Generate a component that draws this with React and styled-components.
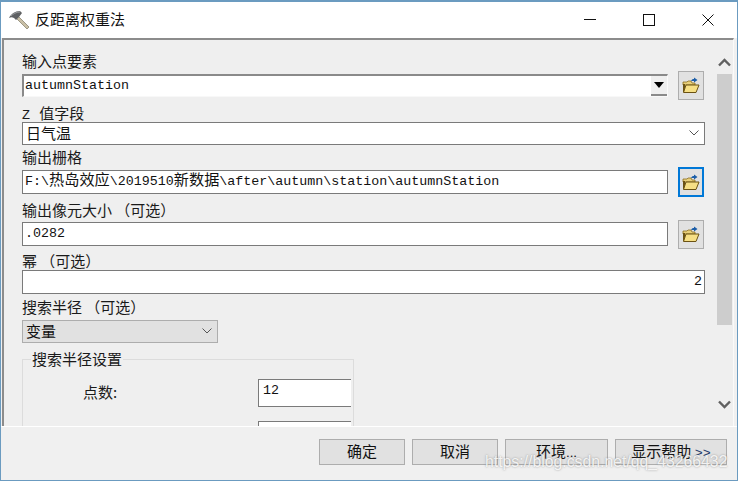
import styled, { createGlobalStyle } from 'styled-components';

const GlobalStyle = createGlobalStyle`
  html, body {
    margin: 0;
    padding: 0;
    background: #f0f0f0;
    overflow: hidden;
  }
  * {
    box-sizing: border-box;
  }
`;

const cjk = '"Noto Sans CJK SC", sans-serif';
const mono = '"Liberation Mono", "Noto Sans CJK SC", monospace';

// Window frame
const Window = styled.div`
  position: relative;
  width: 738px;
  height: 481px;
  border: 1px solid #6b9bc0;
  border-top-width: 2px;
  background: #f0f0f0;
  display: flex;
  flex-direction: column;
  overflow: hidden;
  color: #111;
`;

const TitleBar = styled.div`
  height: 36px;
  flex: none;
  background: #fff;
  display: flex;
  align-items: center;
  padding-left: 7px;
`;

const Title = styled.span`
  font: 15px/20px ${cjk};
  color: #111;
  margin-left: 5px;
  margin-top: -2px;
  flex: 1;
`;

const WinButton = styled.div`
  width: 59px;
  height: 36px;
  display: flex;
  align-items: center;
  justify-content: center;
`;

// Tool body
const Body = styled.div`
  height: 388px;
  flex: none;
  margin: 0 3px 0 1px;
  border-top: 2px solid #8c8c8c;
  border-left: 2px solid #8c8c8c;
  border-right: 1px solid #fafafa;
  background: #efefef;
  display: flex;
  overflow: hidden;
`;

const Form = styled.div`
  flex: 1;
  padding: 12px 0 0 18px;
  min-width: 0;
`;

const Label = styled.div`
  height: 18px;
  font: 15px/18px ${cjk};
  color: #1a1a1a;
  margin-top: ${(p) => p.$mt || 0}px;
  margin-bottom: ${(p) => p.$mb || 0}px;
  white-space: nowrap;
`;

const Latin = styled.span`
  font: 13.33px/18px ${mono};
  margin-right: 6px;
`;

const Row = styled.div`
  height: ${(p) => p.$h}px;
  display: flex;
  align-items: center;
  width: 682px;
`;

const TextBox = styled.div`
  height: ${(p) => p.$h || 24}px;
  width: ${(p) => p.$w || 646}px;
  flex: none;
  border: 1px solid #7a7a7a;
  background: #fff;
  padding: 0 2px;
  font: 13.33px/21px ${mono};
  color: #111;
  text-align: ${(p) => (p.$right ? 'right' : 'left')};
  white-space: nowrap;
  overflow: hidden;
`;

const Wide = styled.span`
  font: 15.2px/1 ${cjk};
`;

const Combo = styled.div`
  width: 646px;
  height: 23px;
  flex: none;
  display: flex;
  background: #f4f4f4;
  border-top: 2px solid #8a8a8a;
  border-left: 2px solid #8a8a8a;
  border-bottom: 1px solid #f8f8f8;
  border-right: 1px solid #fafafa;
`;

const ComboText = styled.div`
  flex: 1;
  background: #fff;
  font: 13.33px/19px ${mono};
  padding-left: 1px;
  color: #111;
`;

const ComboArrow = styled.div`
  width: 16px;
  background: #efefef;
  border-bottom: 2px solid #8a8a8a;
  display: flex;
  align-items: center;
  justify-content: center;
`;

const Select = styled.div`
  width: ${(p) => p.$w}px;
  height: 23px;
  border: 1px solid ${(p) => (p.$grey ? '#adadad' : '#7a7a7a')};
  background: ${(p) => (p.$grey ? '#e1e1e1' : '#fff')};
  display: flex;
  align-items: center;
  justify-content: space-between;
  padding: 0 5px 2px 3px;
  font: 15px/19px ${cjk};
  color: #111;
`;

const Browse = styled.div`
  width: 26px;
  height: ${(p) => p.$h || 29}px;
  margin-left: ${(p) => p.$ml || 10}px;
  flex: none;
  background: #e1e1e1;
  border: ${(p) => (p.$active ? '2px solid #0078d7' : '1px solid #adadad')};
  display: flex;
  align-items: center;
  justify-content: center;
`;

const Group = styled.fieldset`
  width: 332px;
  height: 130px;
  margin: 7px 0 0;
  padding: 11px 2px 0 0;
  border: 1px solid #dcdcdc;
  min-inline-size: 0;
`;

const Legend = styled.legend`
  margin-left: 8px;
  padding: 0 1px;
  height: 18px;
  font: 15px/18px ${cjk};
  color: #1a1a1a;
`;

const GroupRow = styled.div`
  display: flex;
  align-items: center;
  height: 28px;
  margin-bottom: 14px;
`;

const GroupLabel = styled.span`
  width: 235px;
  padding: 0 0 2px 60px;
  font: 15px/26px ${cjk};
  color: #1a1a1a;
  flex: none;
`;

const GroupInput = styled.div`
  flex: 1;
  height: 28px;
  background: #fff;
  border: 1px solid #7a7a7a;
  border-right: 0;
  padding: 0 4px;
  font: 13.33px/22px ${mono};
  color: #111;
`;

// Scrollbar
const ScrollBar = styled.div`
  width: 15px;
  margin: 12px 1px 10px 0;
  flex: none;
  display: flex;
  flex-direction: column;
  align-items: center;
`;

const Chevron = styled.div`
  height: 21px;
  margin-bottom: 1px;
  flex: none;
  display: flex;
  align-items: center;
  justify-content: center;
`;

const Track = styled.div`
  flex: 1;
  width: 100%;
`;

const Thumb = styled.div`
  width: 100%;
  height: 251px;
  background: #cdcdcd;
`;

// Footer
const Footer = styled.div`
  flex: 1;
  background: #f0f0f0;
  border-top: 1px solid #fff;
  display: flex;
  justify-content: flex-end;
  gap: 7px;
  padding: 12px 10px 0 0;
`;

const Btn = styled.div`
  width: ${(p) => p.$w}px;
  height: 26px;
  background: #e1e1e1;
  border: 1px solid #adadad;
  font: 15px/21px ${cjk};
  color: #111;
  text-align: center;
  white-space: nowrap;
`;

const BtnDots = styled.span`
  font: 13.33px/21px "Liberation Sans", sans-serif;
`;

const BtnArrows = styled.span`
  font: 13.33px/21px ${mono};
  color: #1f3a6b;
`;

const Watermark = styled.div`
  position: absolute;
  left: 484px;
  top: 448px;
  font: 15.8px/24px "Liberation Sans", sans-serif;
  color: rgba(255, 255, 255, 0.85);
  text-shadow: 0 0 2px rgba(110, 110, 110, 0.7);
  white-space: nowrap;
`;

function Hammer() {
  return (
    <svg width="22" height="22" viewBox="0 0 22 22">
      <path d="M8 9 L19 20 L21 18 L10 7 Z" fill="#c9bfa6" stroke="#8c8672" strokeWidth="0.8" />
      <path d="M1 9 C3 5 7 2 12 2 L14 4 L11 8 L8 11 L6 9 C4 8 3 8 1 9 Z" fill="#5e6062" />
      <path d="M3 7 C5 5 8 3 12 3" fill="none" stroke="#9b9d9f" strokeWidth="1" />
    </svg>
  );
}

function Folder() {
  return (
    <svg width="18" height="17" viewBox="0 0 18 17">
      <path d="M1 5 H5 L6 4 H9 L10 6 H13 V8 H1 Z" fill="#e8cf7a" stroke="#8a6d1e" strokeWidth="0.8" />
      <path d="M1 5 V15 H3 V7 H1" fill="#6b5213" />
      <path d="M1.5 15.5 L4 8 H17 L14 15.5 Z" fill="#f6df85" stroke="#6b5213" strokeWidth="1" />
      <path d="M9 4 C10 2 11 1.8 12 2 V0.5 L15.5 3 L12 5.5 V4 C11 3.8 10 4 9 4 Z" fill="#1c5ea8" />
    </svg>
  );
}

function ChevronDownThin() {
  return (
    <svg width="10" height="6" viewBox="0 0 10 6">
      <path d="M0.5 0.5 L5 5 L9.5 0.5" fill="none" stroke="#555" strokeWidth="1" />
    </svg>
  );
}

function ScrollChevron({ up }) {
  return (
    <svg width="13" height="9" viewBox="0 0 13 9">
      <path
        d={up ? 'M1 7.5 L6.5 2 L12 7.5' : 'M1 1.5 L6.5 7 L12 1.5'}
        fill="none"
        stroke="#606060"
        strokeWidth="2.4"
      />
    </svg>
  );
}

function App() {
  return (
    <>
      <GlobalStyle />
      <Window>
        <TitleBar>
          <Hammer />
          <Title>反距离权重法</Title>
          <WinButton>
            <svg width="12" height="2" viewBox="0 0 12 2">
              <rect width="12" height="1" fill="#111" />
            </svg>
          </WinButton>
          <WinButton>
            <svg width="12" height="12" viewBox="0 0 12 12">
              <rect x="0.5" y="0.5" width="11" height="11" fill="none" stroke="#111" />
            </svg>
          </WinButton>
          <WinButton>
            <svg width="12" height="12" viewBox="0 0 12 12">
              <path d="M0.5 0.5 L11.5 11.5 M11.5 0.5 L0.5 11.5" stroke="#111" strokeWidth="1" />
            </svg>
          </WinButton>
        </TitleBar>

        <Body>
          <Form>
            <Label $mb={1}>输入点要素</Label>
            <Row $h={29}>
              <Combo>
                <ComboText>autumnStation</ComboText>
                <ComboArrow>
                  <svg width="10" height="6" viewBox="0 0 10 6">
                    <path d="M0 0 H10 L5 6 Z" fill="#000" />
                  </svg>
                </ComboArrow>
              </Combo>
              <Browse $ml={10}>
                <Folder />
              </Browse>
            </Row>

            <Label $mt={4}>
              <Latin>Z</Latin> 值字段
            </Label>
            <Select $w={683}>
              <span>日气温</span>
              <ChevronDownThin />
            </Select>

            <Label $mt={3} $mb={1}>输出栅格</Label>
            <Row $h={30}>
              <TextBox>
                F:\<Wide>热岛效应</Wide>\2019510<Wide>新数据</Wide>\after\autumn\station\autumnStation
              </TextBox>
              <Browse $h={30} $active>
                <Folder />
              </Browse>
            </Row>

            <Label $mt={4}>输出像元大小 （可选）</Label>
            <Row $h={30}>
              <TextBox>.0282</TextBox>
              <Browse>
                <Folder />
              </Browse>
            </Row>

            <Label $mt={3}>幂 （可选）</Label>
            <TextBox $w={683} $right>2</TextBox>

            <Label $mt={4} $mb={4}>搜索半径 （可选）</Label>
            <Select $w={196} $grey>
              <span>变量</span>
              <ChevronDownThin />
            </Select>

            <Group>
              <Legend>搜索半径设置</Legend>
              <GroupRow>
                <GroupLabel>点数:</GroupLabel>
                <GroupInput>12</GroupInput>
              </GroupRow>
              <GroupRow>
                <GroupLabel />
                <GroupInput />
              </GroupRow>
            </Group>
          </Form>

          <ScrollBar>
            <Chevron>
              <ScrollChevron up />
            </Chevron>
            <Thumb />
            <Track />
            <Chevron>
              <ScrollChevron />
            </Chevron>
          </ScrollBar>
        </Body>

        <Footer>
          <Btn $w={86}>确定</Btn>
          <Btn $w={86}>取消</Btn>
          <Btn $w={103}>环境<BtnDots>...</BtnDots></Btn>
          <Btn $w={112}>显示帮助 <BtnArrows>&gt;&gt;</BtnArrows></Btn>
        </Footer>

        <Watermark>https://blog.csdn.net/qq_43266432</Watermark>
      </Window>
    </>
  );
}

export default App;
